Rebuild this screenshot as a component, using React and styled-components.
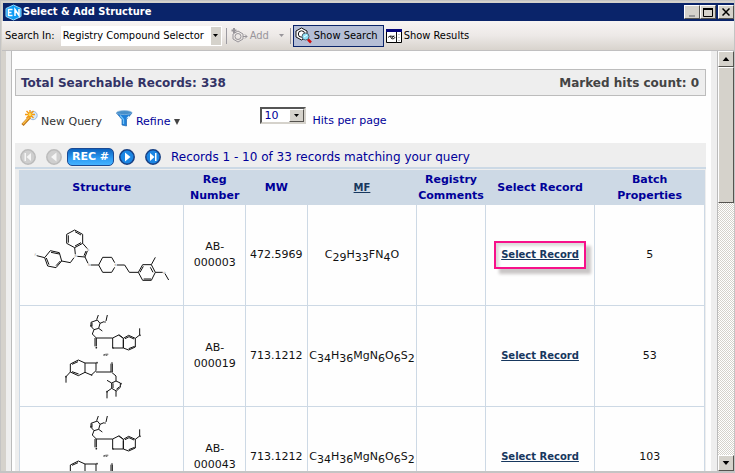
import React from 'react';
import styled, { createGlobalStyle, css } from 'styled-components';

const GlobalStyle = createGlobalStyle`
  * { box-sizing: border-box; }
  body { margin: 0; background: #d5d2cc; }
  button, select { font: inherit; color: inherit; margin: 0; }
  svg { display: block; flex: none; }
`;

const uiFont = '"DejaVu Sans Condensed", Tahoma, sans-serif';
const pageFont = '"DejaVu Sans", Verdana, sans-serif';

const Window = styled.div`
  display: flex;
  flex-direction: column;
  height: 100vh;
  padding: 1px 0 0 1px;
  border: 2px solid #c4c4c4;
  border-width: 1px 1px 2px 1px;
  background: #d5d2cc;
  font-family: ${uiFont};
  font-size: 11px;
  color: #000;
  overflow: hidden;
`;

const TitleBar = styled.header`
  display: flex;
  flex: none;
  align-items: center;
  gap: 1px;
  height: 18px;
  margin-top: 1px;
  margin-left: 1px;
  padding: 0 0 0 2px;
  background: #0a246a;
  color: #fff;
`;

const Title = styled.h1`
  flex: 1;
  margin: 0;
  font-size: 11px;
  line-height: 18px;
  font-weight: bold;
  white-space: nowrap;
`;

const raised = css`
  background: #d5d2cb;
  border: 1px solid;
  border-color: #fff #55534f #55534f #fff;
`;

const CaptionButton = styled.button`
  ${raised}
  display: flex;
  align-items: center;
  justify-content: center;
  width: 16px;
  height: 14px;
  padding: 0;
  margin-left: ${(p) => (p.$apart ? '1px' : '-1px')};
`;

const Toolbar = styled.div`
  display: flex;
  flex: none;
  align-items: center;
  height: 30px;
  padding: 0 4px 0 3px;
  background: linear-gradient(#f7f4f3, #ede9e7 50%, #d8d3cd);
  border-bottom: 1px solid #c0bfc0;
  white-space: nowrap;
`;

const FieldLabel = styled.label`
  margin-right: 6px;
`;

const SelectBox = styled.div`
  display: grid;
  grid-template-columns: 1fr auto;
  width: ${(p) => p.$width};
  height: ${(p) => p.$height};
  background: #fff;
  ${(p) =>
    p.$sunken
      ? css`
          border: 2px solid;
          border-color: #555 #d5d2cb #d5d2cb #555;
          color: #000099;
        `
      : css`
          border: 1px solid #fff;
        `}

  select {
    grid-area: 1 / 1 / 2 / 3;
    width: 100%;
    min-width: 0;
    padding: 0 0 0 ${(p) => (p.$sunken ? '3px' : '1px')};
    border: 0;
    background: transparent;
    appearance: none;
    outline: none;
  }
`;

const SelectArrow = styled.span`
  grid-area: 1 / 2 / 2 / 3;
  display: flex;
  align-items: center;
  justify-content: center;
  width: ${(p) => (p.$raised ? '15px' : '10px')};
  background: #d5d2cb;
  pointer-events: none;
  ${(p) => p.$raised && raised}
`;

const Divider = styled.span`
  flex: none;
  width: 1px;
  height: 16px;
  margin: 0 2px 0 4px;
  background: #9c9aa0;
`;

const ToolButton = styled.button`
  display: flex;
  align-items: center;
  gap: 2px;
  height: 22px;
  padding: 0 ${(p) => (p.disabled ? '1px' : '5px')} 0 1px;
  border: 1px solid ${(p) => (p.$active ? '#0a246a' : 'transparent')};
  background: ${(p) => (p.$active ? '#b5bed6' : 'transparent')};
  color: ${(p) => (p.disabled ? '#98959a' : '#000')};
`;

const DropMark = styled.span`
  display: flex;
  margin-left: 8px;
`;

const Body = styled.div`
  display: flex;
  flex: 1;
  min-height: 0;
  padding-left: 4px;
`;

const Frame = styled.div`
  display: flex;
  flex: 1;
  min-width: 0;
  padding: 0 6px 0 5px;
  background: #eee;
`;

const Page = styled.main`
  flex: 1;
  min-width: 0;
  padding: 18px 5px 0 3px;
  border-left: 1px solid #bbb;
  background: #fefefe;
  font-family: ${pageFont};
  color: #000099;
  overflow: hidden;
`;

const Summary = styled.section`
  display: flex;
  align-items: center;
  justify-content: space-between;
  height: 27px;
  padding: 1px 6px 0 5px;
  border: 1px solid #bcbcbc;
  background: #eee;
  font-size: 12px;
  font-weight: bold;
  color: #333366;
`;

const MarkedCount = styled.span`
  color: #444;
`;

const Actions = styled.div`
  display: flex;
  align-items: flex-start;
  height: 47px;
  padding: 11px 6px 0;
  font-size: 11px;
`;

const ActionLink = styled.a`
  display: flex;
  align-items: center;
  gap: 3px;
  margin-right: 14px;
  color: ${(p) => (p.$dark ? '#333' : '#000099')};
  text-decoration: none;
`;

const ActionText = styled.span`
  padding-top: 8px;
  line-height: 14px;
`;

const HitsField = styled.div`
  display: flex;
  align-items: flex-start;
  gap: 7px;
  margin-left: 66px;

  label { padding-top: 7px; line-height: 14px; }
`;

const Pager = styled.nav`
  display: flex;
  align-items: center;
  height: 26px;
  padding: 3px 5px 0;
  border-bottom: 2px solid #ccd9e5;
  background: #eee;
  font-size: 12px;
`;

const RoundButton = styled.button`
  width: 16px;
  height: 16px;
  padding: 0;
  border: 0;
  border-radius: 50%;
  background: transparent;
  margin-right: ${(p) => p.$gap};
`;

const RecButton = styled.button`
  width: 47px;
  height: 18px;
  padding: 0;
  margin-right: 5px;
  border: 1px solid #1a4a94;
  border-radius: 5px;
  background: linear-gradient(#0c61bd, #2c9cf4 60%, #45b2ff);
  color: #fff;
  font-size: 11px;
  font-weight: bold;
  line-height: 14px;
`;

const GridWrap = styled.div`
  padding: 1px 1px 0 4px;
  background: #eee;
`;

const Grid = styled.table`
  width: 100%;
  table-layout: fixed;
  border-collapse: collapse;
  background: #fefefe;
  font-size: 11px;
  line-height: 16px;
  text-align: center;
`;

const Col = styled.col`
  width: ${(p) => p.$share}%;
`;

const HeadCell = styled.th`
  height: 34px;
  padding: 1px 0 0;
  background: #cdd9e5;
  border: 1px solid #cdd9e5;
`;

const Cell = styled.td`
  height: 101px;
  padding: 0;
  border: 1px solid #cdd9e5;
  color: #111;
  white-space: nowrap;

  svg { margin: 0 auto; }
  sub { font-size: inherit; line-height: 0; vertical-align: -3px; }
`;

const RecordLink = styled.a`
  color: #17375e;
  font-size: 10px;
  font-weight: bold;
  text-decoration: underline;
`;

const Highlight = styled.span`
  display: inline-block;
  padding: 4px 5px 4px;
  border: 2px solid #f7108a;
  box-shadow: 5px 5px 3px #c9c6c6, inset 3px 3px 3px #dcdada;
`;

const ScrollBar = styled.div`
  display: flex;
  flex-direction: column;
  flex: none;
  width: 17px;
  border-left: 1px solid #bbb;
  background: repeating-conic-gradient(#d5d2cb 0 25%, #fff 0 50%) 0 0 / 2px 2px;
`;

const ScrollButton = styled.button`
  ${raised}
  display: flex;
  align-items: center;
  justify-content: center;
  flex: none;
  width: 16px;
  height: 16px;
  padding: 0;
`;

const ScrollThumb = styled.div`
  ${raised}
  flex: 0 0 35%;
`;

const ScrollTrack = styled.div`
  flex: 1;
  min-height: 0;
  display: flex;
  flex-direction: column;
`;

const Triangle = ({ up, color = '#000', size = 5 }) => (
  <svg width={size} height={Math.ceil(size / 2)} viewBox="0 0 10 6">
    <path d={up ? 'M0 6 5 0 10 6Z' : 'M0 0h10L5 6Z'} fill={color} />
  </svg>
);

const RefineMark = () => (
  <svg width="6" height="6" viewBox="0 0 6 6" aria-hidden="true">
    <path d="M0 0h6L3 6Z" fill="#444" />
  </svg>
);

const AppIcon = () => (
  <svg width="17" height="17" viewBox="0 0 17 17" aria-hidden="true">
    <path d="M8.500 1 16 4.500v8L8.500 16 1 12.500v-8Z" fill="#0d9bf5" stroke="#8fdcff" />
    <path d="M7.500 5.500h-4v6h4M3.500 8.500h3M10 12V5.500l4 6V5" fill="none" stroke="#fff" strokeWidth="1.500" />
  </svg>
);

const AddIcon = () => (
  <svg width="17" height="17" viewBox="0 0 17 17" fill="none" stroke="#98959a" aria-hidden="true">
    <path d="M7 4l5 3v5l-5 3-5-3V7Z" />
    <circle cx="7" cy="9.500" r="3" />
    <path d="M3 1v5M.5 3.500h5" strokeWidth="2" />
    <path d="M12 9.500h4m-2-2 2 2-2 2" />
  </svg>
);

const SearchIcon = () => (
  <svg width="17" height="17" viewBox="0 0 17 17" fill="none" aria-hidden="true">
    <path d="M6.500 1 12 4v6l-5.500 3L1 10V4Z" fill="#fff" stroke="#111" />
    <circle cx="6.500" cy="7" r="3.200" stroke="#111" />
    <circle cx="10.500" cy="9.500" r="3.500" fill="#8fe3f7" stroke="#52606d" />
    <path d="m9 10 3-2" stroke="#fff" />
    <path d="m13 12.500 3 3" stroke="#d00f0f" strokeWidth="2.500" />
  </svg>
);

const ResultsIcon = () => (
  <svg width="16" height="14" viewBox="0 0 16 14" fill="none" aria-hidden="true">
    <path d="M.5.5h15v13H.5Z" fill="#fff" stroke="#000" />
    <path d="M0 0h16v3H0Z" fill="#06067c" />
    <path d="M10.500 3v11" stroke="#111" />
    <path d="M2 8.500 4 7l1.500 2.500L8 6.500M4 7l4 .5 1 1-2 1.500-1.500-.5" stroke="#111" strokeWidth=".9" />
    <path d="M12 5.500h2m-2 3h2m-2 3h2" stroke="#ccc" />
  </svg>
);

const WandIcon = () => (
  <svg width="17" height="17" viewBox="0 0 17 17" aria-hidden="true">
    <circle cx="12" cy="5.500" r="4.200" fill="#d9eafa" stroke="#9bb9da" />
    <path d="m1.500 15 7-7.500" stroke="#bd7314" strokeWidth="3" />
    <path d="m2 14 6-6.500" stroke="#fbc04a" strokeWidth="1.300" />
    <path d="M9 0v9M4 4.500h10M5.500 1l7 7m0-7-7 7" stroke="#f49a12" strokeWidth="1.400" />
    <circle cx="9" cy="4.500" r="1.500" fill="#ffe14d" />
  </svg>
);

const FunnelIcon = () => (
  <svg width="17" height="17" viewBox="0 0 17 17" aria-hidden="true">
    <path d="M.5 3 6 9.500V15l4.500 1V9.500L16 3Z" fill="#2080d8" stroke="#1c66b0" strokeWidth=".7" />
    <ellipse cx="8.300" cy="2.600" rx="7.700" ry="2" fill="#478fc9" stroke="#8fb9dc" strokeWidth=".7" />
    <path d="m4 5.500 3.500 4V14" fill="none" stroke="#72c4fa" strokeWidth="1.300" />
    <path d="m10 8.500 3-3v2.500Z" fill="#d5efff" />
  </svg>
);

const PagerIcon = ({ kind, muted }) => {
  const arrows = {
    first: 'M4.500 4H6v8H4.500ZM11 4v8L6.500 8Z',
    prev: 'M10.500 3.500v9L5 8Z',
    next: 'M6 3.500v9L11.500 8Z',
    last: 'M5 4v8l4.500-4ZM10 4h1.500v8H10Z',
  };
  return (
    <svg width="16" height="16" viewBox="0 0 16 16" aria-hidden="true">
      <circle cx="8" cy="8" r="7.200" fill={muted ? '#cfcfcf' : '#1b86e4'} stroke={muted ? '#bbb' : '#173f82'} strokeWidth="1.500" />
      <path d={arrows[kind]} fill={muted ? '#f5f5f5' : '#fff'} />
    </svg>
  );
};

const MoleculeA = () => (
  <svg width="144" height="60" viewBox="45 75 432 180" role="img" aria-label="Structure">
    <g fill="none" stroke="#111" strokeWidth="3">
      <path d="M155 103 179 90 203 103V130L179 143 155 130ZM160 106v22M180 95l18 10M180 138l18-10" />
      <path d="M203 130 217 146M217 153 210 171 187 169M181 163 179 143M207 167l6-14" />
      <path d="M177 173 166 188 140 183 133 158 106 152 89 173 98 198 123 203 140 183M133 162l-25-5M94 174l8 20M123 197l13-14M89 173 65 167" />
      <path d="M210 171 219 190M227 195H251L263 172H290L299 188M299 202 290 217H263L251 195M306 195H329L343 217H370L383 194H409L421 217 409 241H383L370 217M375 217l10-18M386 237h22M414 217l-8-15M409 194 421 172M421 217H443M450 221 461 240" />
    </g>
    <g fill="#888" fontFamily="DejaVu Sans" fontSize="9" textAnchor="middle">
      <text x="61" y="169">F</text><text x="219" y="153">N</text><text x="182" y="172">N</text>
      <text x="222" y="199">N</text><text x="302" y="199">N</text><text x="448" y="221">O</text>
    </g>
  </svg>
);

const MoleculeB = () => (
  <svg width="80" height="88" viewBox="64 37 240 264" role="img" aria-label="Structure">
    <g fill="none" stroke="#111" strokeWidth="3">
      <path d="M151 68 170 61 178 71 174 86 160 90 151 80ZM154 69v12M168 60 173 46M178 71l12-5M196 64 200 46M174 86l11 8M160 90l-5 13 12 12H216L234 106 248 116V145H216V115M167 115v25M163 115v25M248 116 264 107 284 116V142L264 151 248 145M248 120v25M253 117l12-6 15 7M264 147l18-7M284 116 297 106V86M239 108l9 8" />
      <path d="M89 193 113 181 133 190H166V213L152 226 133 218 113 228 89 217ZM94 194l18-8M94 216l20 7M133 190v28M166 217H211M211 192v25M215 192v25M212 217 226 229V244L239 250V263L227 274 213 266V250L226 244M217 251v14M227 269l10-8M213 250 199 242M226 274V291M213 266l-14 10V296M89 217 76 231V249" />
      <path d="m187 167 7-4m-3 5 9-6m-4 6 7-4" strokeWidth="2" />
    </g>
    <g fill="#222">
      <circle cx="151" cy="78" r="2.500" /><circle cx="193" cy="67" r="2.500" /><circle cx="167" cy="144" r="2.500" />
      <circle cx="217" cy="145" r="2.500" /><circle cx="236" cy="107" r="2.500" /><circle cx="298" cy="107" r="2.500" />
      <circle cx="169" cy="189" r="2.500" /><circle cx="153" cy="226" r="2.500" /><circle cx="214" cy="190" r="2.500" />
      <circle cx="241" cy="252" r="2.500" /><circle cx="199" cy="276" r="2.500" /><circle cx="76" cy="231" r="2.500" />
    </g>
  </svg>
);

const Formula = ({ parts }) =>
  parts.map(([atom, count], i) => (
    <React.Fragment key={i}>
      {atom}
      {count && <sub>{count}</sub>}
    </React.Fragment>
  ));

const magnesiumSalt = [['C', 34], ['H', 36], ['Mg'], ['N', 6], ['O', 6], ['S', 2]];

const records = [
  { id: 'AB-000003', mw: '472.5969', formula: [['C', 29], ['H', 33], ['F'], ['N', 4], ['O']], batch: 5, Drawing: MoleculeA, marked: true },
  { id: 'AB-000019', mw: '713.1212', formula: magnesiumSalt, batch: 53, Drawing: MoleculeB },
  { id: 'AB-000043', mw: '713.1212', formula: magnesiumSalt, batch: 103, Drawing: MoleculeB },
];

const columnShares = [24, 9, 9, 16, 10, 16, 16];

export default function App() {
  return (
    <Window>
      <GlobalStyle />
      <TitleBar>
        <AppIcon />
        <Title>Select &amp; Add Structure</Title>
        <CaptionButton aria-label="Minimize">
          <svg width="10" height="9"><path d="M2 7h6v2H2Z" fill="#999" /></svg>
        </CaptionButton>
        <CaptionButton aria-label="Maximize">
          <svg width="10" height="9"><path d="M.5 1h9v7.500h-9Z" fill="none" stroke="#000" /><path d="M0 0h10v2H0Z" /></svg>
        </CaptionButton>
        <CaptionButton aria-label="Close" $apart>
          <svg width="8" height="8"><path d="m.5.5 7 7m0-7-7 7" stroke="#000" strokeWidth="1.500" /></svg>
        </CaptionButton>
      </TitleBar>
      <Toolbar>
        <FieldLabel htmlFor="source">Search In:</FieldLabel>
        <SelectBox $width="161px" $height="20px">
          <select id="source" defaultValue="registry">
            <option value="registry">Registry Compound Selector</option>
          </select>
          <SelectArrow><Triangle /></SelectArrow>
        </SelectBox>
        <Divider />
        <ToolButton disabled>
          <AddIcon />
          Add
          <DropMark><Triangle color="#98959a" /></DropMark>
        </ToolButton>
        <Divider />
        <ToolButton $active>
          <SearchIcon />
          Show Search
        </ToolButton>
        <ToolButton>
          <ResultsIcon />
          Show Results
        </ToolButton>
      </Toolbar>
      <Body>
        <Frame>
          <Page>
            <Summary>
              <span>Total Searchable Records: 338</span>
              <MarkedCount>Marked hits count: 0</MarkedCount>
            </Summary>
            <Actions>
              <ActionLink href="#new" $dark>
                <WandIcon />
                <ActionText>New Query</ActionText>
              </ActionLink>
              <ActionLink href="#refine">
                <FunnelIcon />
                <ActionText>Refine</ActionText>
                <ActionText><RefineMark /></ActionText>
              </ActionLink>
              <HitsField>
                <SelectBox $sunken $width="46px" $height="17px">
                  <select id="hits" defaultValue="10">
                    <option>10</option>
                  </select>
                  <SelectArrow $raised><Triangle /></SelectArrow>
                </SelectBox>
                <label htmlFor="hits">Hits per page</label>
              </HitsField>
            </Actions>
            <Pager>
              <RoundButton aria-label="First page" $gap="10px"><PagerIcon kind="first" muted /></RoundButton>
              <RoundButton aria-label="Previous page" $gap="5px"><PagerIcon kind="prev" muted /></RoundButton>
              <RecButton>REC #</RecButton>
              <RoundButton aria-label="Next page" $gap="10px"><PagerIcon kind="next" /></RoundButton>
              <RoundButton aria-label="Last page" $gap="10px"><PagerIcon kind="last" /></RoundButton>
              <span>Records 1 - 10 of 33 records matching your query</span>
            </Pager>
            <GridWrap>
              <Grid>
                <colgroup>
                  {columnShares.map((share, i) => <Col key={i} $share={share} />)}
                </colgroup>
                <thead>
                  <tr>
                    <HeadCell>Structure</HeadCell>
                    <HeadCell>Reg<br />Number</HeadCell>
                    <HeadCell>MW</HeadCell>
                    <HeadCell><RecordLink href="#mf">MF</RecordLink></HeadCell>
                    <HeadCell>Registry<br />Comments</HeadCell>
                    <HeadCell>Select Record</HeadCell>
                    <HeadCell>Batch<br />Properties</HeadCell>
                  </tr>
                </thead>
                <tbody>
                  {records.map(({ id, mw, formula, batch, Drawing, marked }) => (
                    <tr key={id}>
                      <Cell><Drawing /></Cell>
                      <Cell>{id.slice(0, 3)}<br />{id.slice(3)}</Cell>
                      <Cell>{mw}</Cell>
                      <Cell><Formula parts={formula} /></Cell>
                      <Cell />
                      <Cell>
                        {marked
                          ? <Highlight><RecordLink href={`#${id}`}>Select Record</RecordLink></Highlight>
                          : <RecordLink href={`#${id}`}>Select Record</RecordLink>}
                      </Cell>
                      <Cell>{batch}</Cell>
                    </tr>
                  ))}
                </tbody>
              </Grid>
            </GridWrap>
          </Page>
        </Frame>
        <ScrollBar>
          <ScrollButton aria-label="Scroll up"><Triangle up size={8} /></ScrollButton>
          <ScrollTrack><ScrollThumb /></ScrollTrack>
          <ScrollButton aria-label="Scroll down"><Triangle size={8} /></ScrollButton>
        </ScrollBar>
      </Body>
    </Window>
  );
}
